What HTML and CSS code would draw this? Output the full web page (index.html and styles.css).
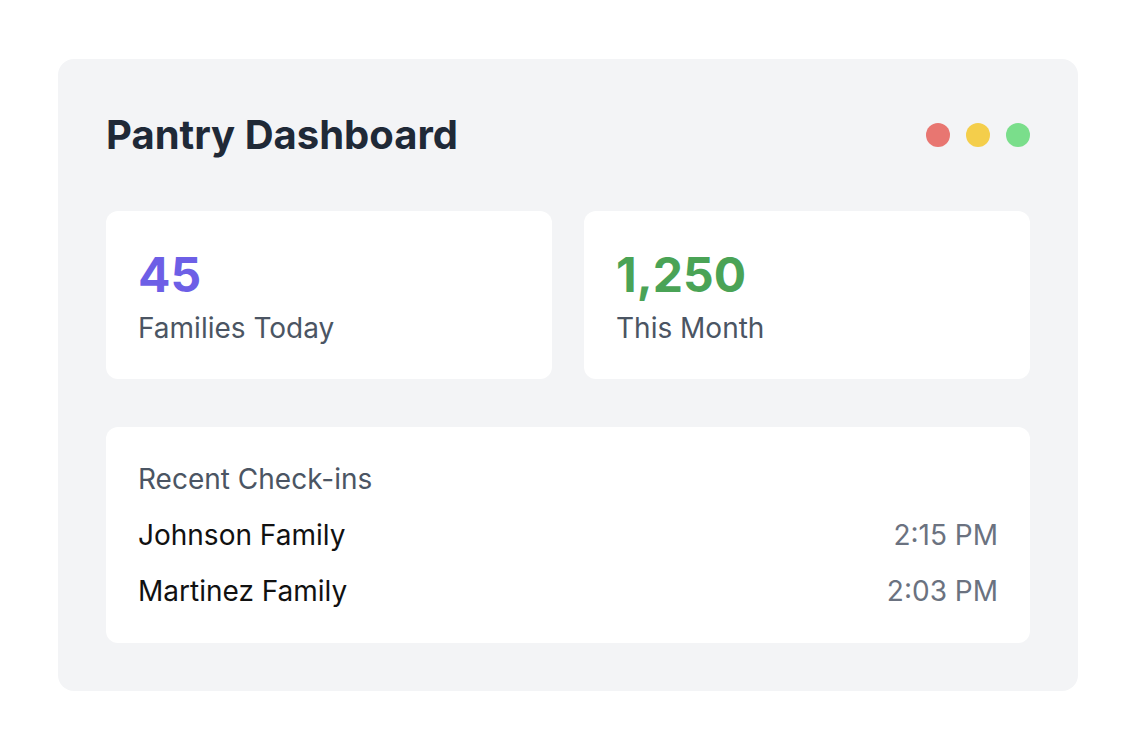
FILE: index.html
```html
<!DOCTYPE html>
<html lang="en">
<head>
<meta charset="utf-8">
<title>Pantry Dashboard</title>
<link rel="stylesheet" href="styles.css">
</head>
<body>
<div class="panel">
  <div class="header">
    <h1 class="title">Pantry Dashboard</h1>
    <div class="dots">
      <span class="dot dot-red"></span>
      <span class="dot dot-yellow"></span>
      <span class="dot dot-green"></span>
    </div>
  </div>
  <div class="stats">
    <div class="card stat">
      <div class="stat-value purple">45</div>
      <div class="stat-label">Families Today</div>
    </div>
    <div class="card stat">
      <div class="stat-value green">1,250</div>
      <div class="stat-label">This Month</div>
    </div>
  </div>
  <div class="card recent">
    <div class="recent-title">Recent Check-ins</div>
    <div class="row"><span class="name">Johnson Family</span><span class="time">2:15 PM</span></div>
    <div class="row"><span class="name">Martinez Family</span><span class="time">2:03 PM</span></div>
  </div>
</div>
</body>
</html>
```
FILE: styles.css
```css
* { box-sizing: border-box; }
html, body { margin: 0; padding: 0; background: #ffffff; }
body {
  font-family: Inter, "Noto Sans", "Liberation Sans", sans-serif;
  padding-top: 59px;
  padding-left: 58px;
}
.panel {
  width: 1020px;
  height: 632px;
  background: #f3f4f6;
  border-radius: 16px;
  padding: 48px;
}
.header {
  display: flex;
  align-items: center;
  justify-content: space-between;
  height: 56px;
  margin-bottom: 48px;
}
.title {
  margin: 0;
  font-size: 40px;
  font-weight: 700;
  color: #1f2937;
  line-height: 56px;
}
.dots { display: flex; gap: 16px; }
.dot { width: 24px; height: 24px; border-radius: 50%; display: block; }
.dot-red { background: #e87671; }
.dot-yellow { background: #f4ce4b; }
.dot-green { background: #7ade8b; }
.stats {
  display: grid;
  grid-template-columns: 1fr 1fr;
  gap: 32px;
  margin-bottom: 48px;
}
.card {
  background: #ffffff;
  border-radius: 12px;
  padding: 32px;
}
.stat { height: 168px; }
.stat-value {
  font-size: 48px;
  font-weight: 700;
  line-height: 64px;
}
.purple { color: #6d5fe6; }
.green { color: #4aa356; }
.stat-label {
  margin-top: 2px;
  font-size: 28px;
  line-height: 38px;
  color: #4b5563;
}
.recent { height: 216px; }
.recent-title {
  font-size: 28px;
  line-height: 40px;
  color: #4b5563;
  margin-bottom: 16px;
}
.row {
  display: flex;
  justify-content: space-between;
  font-size: 28px;
  line-height: 40px;
}
.row + .row { margin-top: 16px; }
.name { color: #111111; }
.time { color: #6b7280; }
```
